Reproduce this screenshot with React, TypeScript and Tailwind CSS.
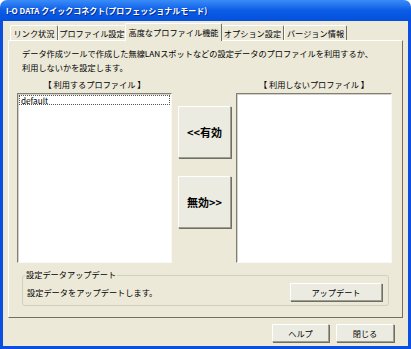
import React from "react";

const font = { fontFamily: '"Noto Sans CJK JP", "Liberation Sans", sans-serif' };

interface TabProps {
    label: string;
    width: string;
    active?: boolean;
}

function Tab({ label, width, active = false }: TabProps) {
    if (active) {
        return (
            <div className={`${width} relative z-10 -mb-px -mx-[1px] h-[18px] flex items-center justify-center bg-[#ece9d8] border border-b-0 border-t-white border-l-white border-r-[#716f64] rounded-t-[2px]`}>
                {label}
            </div>
        );
    }
    return (
        <div className={`${width} h-[15px] flex items-center justify-center bg-[#ece9d8] border border-b-0 border-t-white border-l-white border-r-[#716f64] rounded-t-[2px]`}>
            {label}
        </div>
    );
}

function Button({ children, className = "" }: { children: React.ReactNode; className?: string }) {
    return (
        <button className={`flex items-center justify-center bg-[#ecebe2] border border-t-white border-l-white border-r-[#9d9d92] border-b-[#9d9d92] shadow-[1px_1px_0_#6f6f66] ${className}`}>
            {children}
        </button>
    );
}

function ListBox({ children }: { children?: React.ReactNode }) {
    return (
        <div className="h-[170px] bg-white border border-t-[#7f7f78] border-l-[#7f7f78] border-r-[#f8f8f4] border-b-[#f8f8f4] shadow-[inset_1px_1px_0_#d4d0c8] p-[1px]">
            {children}
        </div>
    );
}

export default function App() {
    return (
        <div className="w-[411px] h-[349px] flex flex-col overflow-hidden text-[8.2px] leading-none text-black bg-white" style={font}>
            <div className="h-[21px] rounded-t-[7px] bg-gradient-to-b from-[#3a8cf8] via-[#0b5ce6] to-[#0450dc] flex items-center pl-[6px] text-white font-bold text-[8px] [text-shadow:1px_1px_0_#0a2c8a]">
                I-O DATA クイックコネクト(プロフェッショナルモード)
            </div>

            <div className="flex-1 flex flex-col bg-[#ece9d8] border-x-[3px] border-b-[3px] border-[#0a4fe0] px-[5px]">
                <div className="flex items-end pl-[2px] pt-[2px] h-[19px]">
                    <Tab label="リンク状況" width="w-[48px]" />
                    <Tab label="プロファイル設定" width="w-[68px]" />
                    <Tab label="高度なプロファイル機能" width="w-[97px]" active />
                    <Tab label="オプション設定" width="w-[63px]" />
                    <Tab label="バージョン情報" width="w-[63px]" />
                </div>

                <div className="h-[278px] flex flex-col bg-[#ece9d8] border border-t-white border-l-white border-r-[#716f64] border-b-[#716f64]">
                    <div className="pl-[13px] pt-[5px] leading-[14px]">
                        <p>データ作成ツールで作成した無線LANスポットなどの設定データのプロファイルを利用するか、</p>
                        <p>利用しないかを設定します。</p>
                    </div>

                    <div className="flex px-[8px] mt-[3px]">
                        <div className="w-[155px] flex flex-col">
                            <div className="h-[14px] pt-[3px] mb-[2px] text-center">【 利用するプロファイル 】</div>
                            <ListBox>
                                <div className="h-[10px] flex items-center pl-[1px] border border-dotted border-[#555]">default</div>
                            </ListBox>
                        </div>
                        <div className="w-[53px] ml-[6px] mr-[5px] pt-[29px] flex flex-col gap-[18px]">
                            <Button className="h-[52px] text-[11px] font-bold">&lt;&lt;有効</Button>
                            <Button className="h-[52px] text-[11px] font-bold">無効&gt;&gt;</Button>
                        </div>
                        <div className="w-[156px] flex flex-col">
                            <div className="h-[14px] pt-[3px] mb-[2px] text-center">【 利用しないプロファイル 】</div>
                            <ListBox />
                        </div>
                    </div>

                    <fieldset className="mx-[13px] mt-[7px] border border-[#d0d0bf] rounded-[3px] pl-[4px] pr-[6px] pt-[3px] pb-[4px] flex items-center justify-between">
                        <legend className="-ml-[2px] px-[1px] h-[10px]">設定データアップデート</legend>
                        <span className="pt-[1px]">設定データをアップデートします。</span>
                        <Button className="w-[92px] h-[18px]">アップデート</Button>
                    </fieldset>
                </div>

                <div className="flex justify-end gap-[7px] pt-[6px] pr-[9px]">
                    <Button className="w-[57px] h-[18px]">ヘルプ</Button>
                    <Button className="w-[58px] h-[18px]">閉じる</Button>
                </div>
            </div>
        </div>
    );
}
